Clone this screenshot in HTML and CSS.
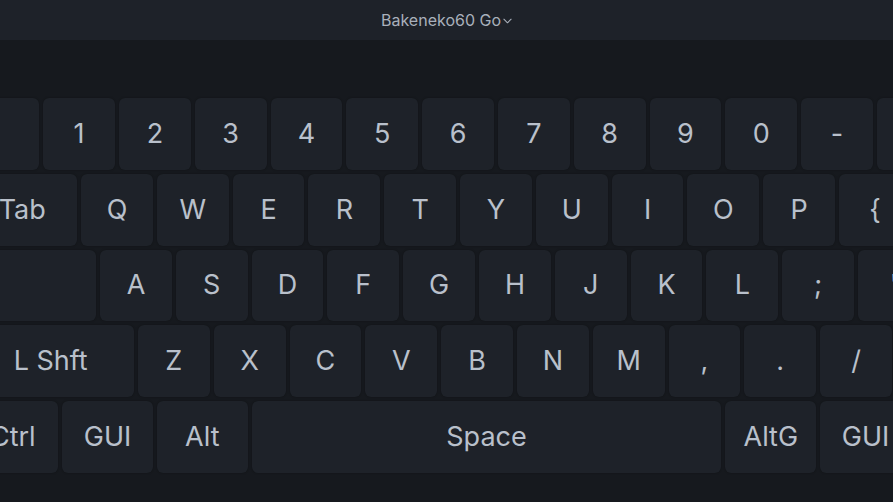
FILE: index.html
```html
<!DOCTYPE html>
<html lang="en">
<head>
<meta charset="utf-8">
<title>Bakeneko60 Go</title>
<link rel="stylesheet" href="styles.css">
</head>
<body>
<header class="topbar">
  <button class="board-select">Bakeneko60 Go<svg class="chev" viewBox="0 0 10 6" width="9" height="6"><path d="M1 1l4 4 4-4" fill="none" stroke="currentColor" stroke-width="1.2" stroke-linecap="round" stroke-linejoin="round"/></svg></button>
</header>
<main class="stage">
  <div class="keyboard">
    <div class="row">
      <div class="key w1"></div>
      <div class="key w1">1</div>
      <div class="key w1">2</div>
      <div class="key w1">3</div>
      <div class="key w1">4</div>
      <div class="key w1">5</div>
      <div class="key w1">6</div>
      <div class="key w1">7</div>
      <div class="key w1">8</div>
      <div class="key w1">9</div>
      <div class="key w1">0</div>
      <div class="key w1">-</div>
      <div class="key w1">=</div>
      <div class="key w2">Bksp</div>
    </div>
    <div class="row">
      <div class="key w15">Tab</div>
      <div class="key w1">Q</div>
      <div class="key w1">W</div>
      <div class="key w1">E</div>
      <div class="key w1">R</div>
      <div class="key w1">T</div>
      <div class="key w1">Y</div>
      <div class="key w1">U</div>
      <div class="key w1">I</div>
      <div class="key w1">O</div>
      <div class="key w1">P</div>
      <div class="key w1">{</div>
      <div class="key w1">}</div>
      <div class="key w15">|</div>
    </div>
    <div class="row">
      <div class="key w175"></div>
      <div class="key w1">A</div>
      <div class="key w1">S</div>
      <div class="key w1">D</div>
      <div class="key w1">F</div>
      <div class="key w1">G</div>
      <div class="key w1">H</div>
      <div class="key w1">J</div>
      <div class="key w1">K</div>
      <div class="key w1">L</div>
      <div class="key w1">;</div>
      <div class="key w1">'</div>
      <div class="key w225">Enter</div>
    </div>
    <div class="row">
      <div class="key w225">L Shft</div>
      <div class="key w1">Z</div>
      <div class="key w1">X</div>
      <div class="key w1">C</div>
      <div class="key w1">V</div>
      <div class="key w1">B</div>
      <div class="key w1">N</div>
      <div class="key w1">M</div>
      <div class="key w1">,</div>
      <div class="key w1">.</div>
      <div class="key w1">/</div>
      <div class="key w275">R Shft</div>
    </div>
    <div class="row">
      <div class="key w125">Ctrl</div>
      <div class="key w125">GUI</div>
      <div class="key w125">Alt</div>
      <div class="key w625">Space</div>
      <div class="key w125">AltG</div>
      <div class="key w125">GUI</div>
      <div class="key w125">Menu</div>
      <div class="key w125">Ctrl</div>
    </div>
  </div>
</main>
</body>
</html>
```
FILE: styles.css
```css
html, body {
  margin: 0;
  padding: 0;
  background: #16191e;
  height: 100%;
  overflow: hidden;
}
body {
  font-family: Inter, "Noto Sans", "Liberation Sans", sans-serif;
  color: #b8bfca;
}
.topbar {
  height: 40px;
  background: #1e2229;
  display: flex;
  align-items: center;
  justify-content: center;
}
.board-select {
  background: none;
  border: 0;
  padding: 0;
  font: inherit;
  font-size: 16px;
  color: #a9b0bb;
  display: flex;
  align-items: center;
  gap: 2px;
  margin-top: -1px;
}
.chev {
  margin-top: 2px;
}
.stage {
  --u: 75.8px;
  --g: 4px;
  padding-top: 56px;
}
.keyboard {
  margin-left: -34.6px;
  width: calc(var(--u) * 15);
  display: flex;
  flex-direction: column;
}
.row {
  display: flex;
}
.key {
  flex: none;
  box-sizing: border-box;
  height: calc(var(--u) - var(--g));
  margin: calc(var(--g) / 2);
  border-radius: 6px;
  background: #1e2229;
  box-shadow: 0 0 2px rgba(0, 0, 0, 0.35);
  display: flex;
  align-items: center;
  justify-content: center;
  font-size: 27px;
  line-height: 1;
  color: #b9c0cb;
  padding-bottom: 1px;
}
.w1 { width: calc(var(--u) * 1 - var(--g)); }
.w125 { width: calc(var(--u) * 1.25 - var(--g)); }
.w15 { width: calc(var(--u) * 1.5 - var(--g)); }
.w175 { width: calc(var(--u) * 1.75 - var(--g)); }
.w2 { width: calc(var(--u) * 2 - var(--g)); }
.w225 { width: calc(var(--u) * 2.25 - var(--g)); }
.w275 { width: calc(var(--u) * 2.75 - var(--g)); }
.w625 { width: calc(var(--u) * 6.25 - var(--g)); }
```
